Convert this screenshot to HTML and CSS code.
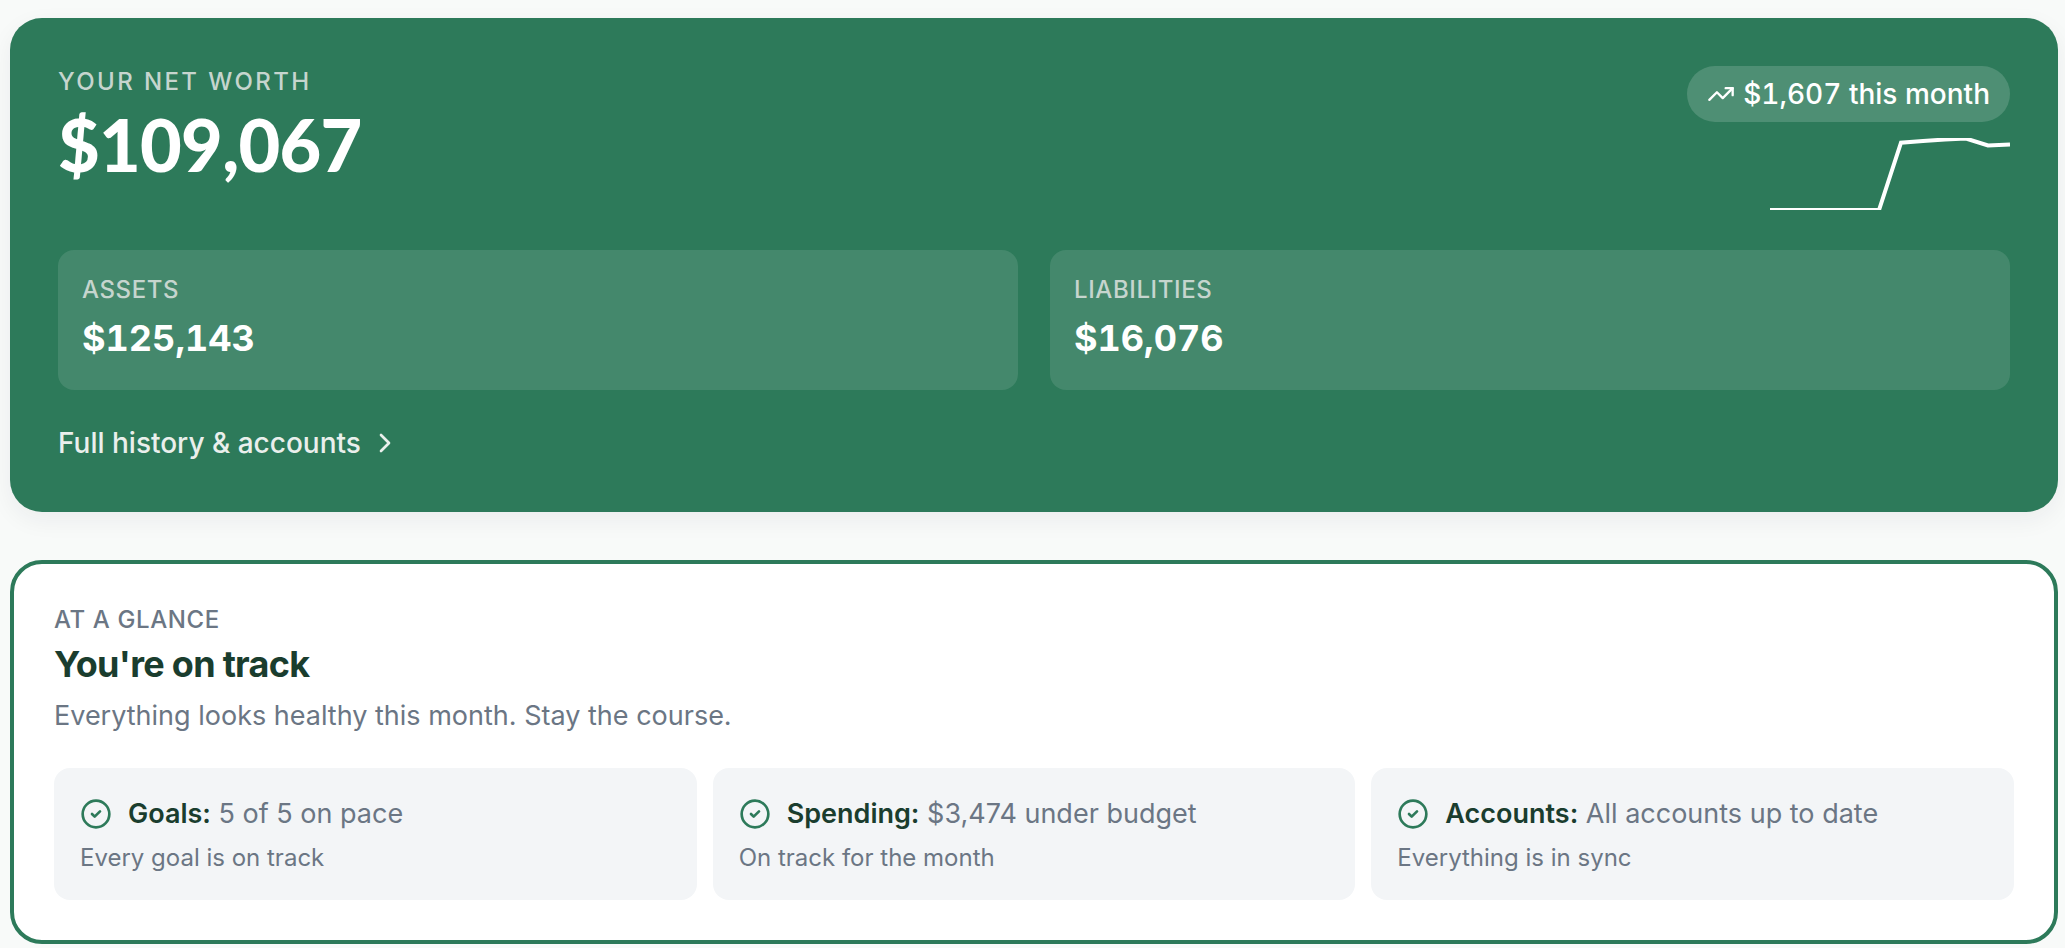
FILE: index.html
```html
<!DOCTYPE html>
<html lang="en">
<head>
  <meta charset="UTF-8">
  <meta name="viewport" content="width=device-width, initial-scale=1.0">
  <title>Net worth</title>
  <link rel="stylesheet" href="styles.css">
</head>
<body>
  <main class="dashboard">
    <section class="net-worth">
      <div class="net-worth-top">
        <div>
          <p class="eyebrow eyebrow-wide">Your net worth</p>
          <h1 class="total">$109,067</h1>
        </div>
        <div class="trend">
          <span class="pill">
            <svg class="icon-sm" viewBox="0 0 24 24" aria-hidden="true">
              <path d="M22 7l-8.500 8.500-5-5L2 17"/>
              <path d="M16 7h6v6"/>
            </svg>
            $1,607 this month
          </span>
          <svg class="sparkline" viewBox="0 0 240 72" aria-hidden="true">
            <polyline points="0,72 109,72 131,4.700 153,3 175,1.500 196,0.500 218,7.500 240,6.500"/>
          </svg>
        </div>
      </div>

      <div class="stats">
        <div class="stat">
          <p class="eyebrow">Assets</p>
          <p class="stat-value">$125,143</p>
        </div>
        <div class="stat">
          <p class="eyebrow">Liabilities</p>
          <p class="stat-value">$16,076</p>
        </div>
      </div>

      <a class="history-link" href="#accounts">
        Full history &amp; accounts
        <svg class="icon" viewBox="0 0 24 24" aria-hidden="true"><path d="M9 18l6-6-6-6"/></svg>
      </a>
    </section>

    <section class="glance">
      <p class="eyebrow">At a glance</p>
      <h2>You're on track</h2>
      <p class="summary">Everything looks healthy this month. Stay the course.</p>

      <div class="checks">
        <div class="check">
          <p class="check-title">
            <svg class="icon" viewBox="0 0 24 24" aria-hidden="true"><circle cx="12" cy="12" r="10"/><path d="M9 12l2 2 4-4"/></svg>
            <span><strong>Goals:</strong> 5 of 5 on pace</span>
          </p>
          <p class="check-note">Every goal is on track</p>
        </div>
        <div class="check">
          <p class="check-title">
            <svg class="icon" viewBox="0 0 24 24" aria-hidden="true"><circle cx="12" cy="12" r="10"/><path d="M9 12l2 2 4-4"/></svg>
            <span><strong>Spending:</strong> $3,474 under budget</span>
          </p>
          <p class="check-note">On track for the month</p>
        </div>
        <div class="check" id="accounts">
          <p class="check-title">
            <svg class="icon" viewBox="0 0 24 24" aria-hidden="true"><circle cx="12" cy="12" r="10"/><path d="M9 12l2 2 4-4"/></svg>
            <span><strong>Accounts:</strong> All accounts up to date</span>
          </p>
          <p class="check-note">Everything is in sync</p>
        </div>
      </div>
    </section>
  </main>
</body>
</html>
```

FILE: styles.css
```css
:root {
  --green: #2d7a5a;
  --ink: #1a3d2e;
  --muted: #6b7684;
  --bg: #f8faf9;
  --tile: #f3f5f7;
}
*{box-sizing:border-box;margin:0;padding:0;}
body{font-family:Inter,sans-serif;font-size:27px;line-height:40px;background:var(--bg);color:var(--ink);}
.dashboard{display:grid;gap:48px;padding:18px 7px 4px 10px;}

.eyebrow{font-size:24px;line-height:32px;font-weight:500;letter-spacing:0.025em;text-transform:uppercase;}
.eyebrow-wide{letter-spacing:0.1em;}

svg{flex-shrink:0;fill:none;stroke:currentColor;stroke-width:2;stroke-linecap:round;stroke-linejoin:round;}
.icon{width:32px;height:32px;}
.icon-sm{width:28px;height:28px;}

/* net worth */
.net-worth{background:var(--green);color:#fff;border-radius:32px;padding:48px;box-shadow:0 8px 24px rgba(26,31,54,0.06);}
.net-worth .eyebrow{color:#c6d5ce;}
.net-worth-top{display:flex;justify-content:space-between;margin-bottom:40px;}
.total{font-family:Lato,sans-serif;font-size:72px;line-height:80px;font-weight:900;letter-spacing:-0.01em;margin-top:6px;}
.trend{display:flex;flex-direction:column;align-items:flex-end;gap:16px;}
.pill{display:inline-flex;align-items:center;gap:8px;padding:8px 20px;border-radius:28px;background:rgba(255,255,255,0.16);font-size:28px;font-weight:500;font-variant-numeric:tabular-nums;}
.sparkline{width:240px;height:72px;overflow:hidden;stroke-width:4;stroke-linecap:butt;stroke-linejoin:miter;}

.stats{display:grid;grid-template-columns:1fr 1fr;gap:32px;}
.stat{background:rgba(255,255,255,0.11);border-radius:16px;padding:24px;}
.stat-value{font-size:36px;line-height:56px;font-weight:700;margin-top:4px;font-variant-numeric:tabular-nums;}
.history-link{display:flex;align-items:center;gap:8px;width:fit-content;margin-top:32px;font-size:28px;line-height:42px;font-weight:500;color:#eaefec;text-decoration:none;}
.history-link:hover{color:#fff;}

/* at a glance */
.glance{background:#fff;border:4px solid var(--green);border-radius:32px;padding:40px;}
.glance .eyebrow{color:var(--muted);}
h2{font-size:36px;line-height:48px;font-weight:700;letter-spacing:-0.02em;margin-top:4px;}
.summary{color:var(--muted);margin-top:8px;}
.checks{display:grid;grid-template-columns:repeat(3,1fr);gap:16px;margin-top:32px;}
.check{background:var(--tile);border-radius:16px;padding:24px 26px;color:var(--muted);}
.check-title{display:flex;align-items:center;gap:16px;line-height:44px;}
.check-title .icon{color:var(--green);}
.check-title strong{font-weight:600;color:var(--ink);}
.check-note{font-size:24px;line-height:36px;margin-top:4px;}
```
